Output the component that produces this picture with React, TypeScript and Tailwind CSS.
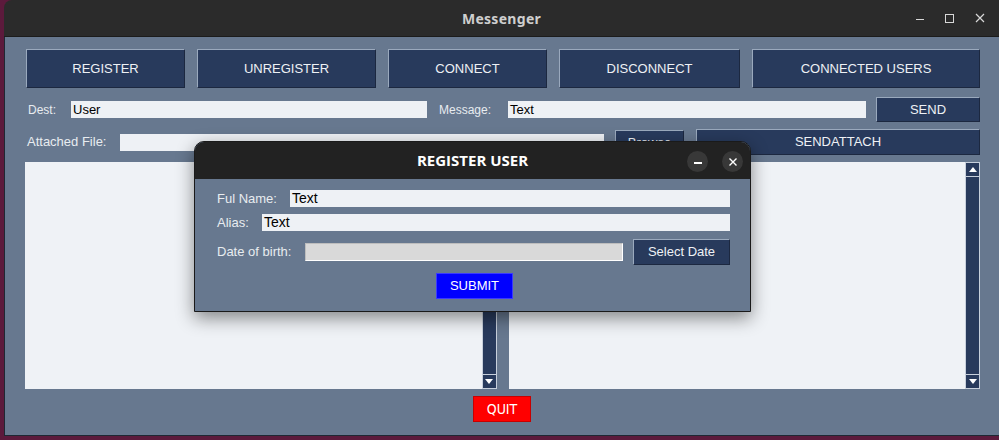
import React from "react";

const ui = { fontFamily: '"Liberation Sans", Arial, sans-serif' };

function Btn({ label, className = "" }: { label: string; className?: string }) {
  return (
    <div
      className={`flex items-center justify-center bg-[#283a5c] text-[13px] text-[#eef1f5] border border-t-[#9aa9bd] border-l-[#9aa9bd] border-b-[#1c2840] border-r-[#1c2840] ${className}`}
    >
      {label}
    </div>
  );
}

function Field({ value = "", className = "" }: { value?: string; className?: string }) {
  return (
    <div className={`h-[17px] bg-[#eef1f5] text-[13px] leading-[17px] text-black px-[2px] ${className}`}>
      {value}
    </div>
  );
}

function ScrollBar() {
  return (
    <div className="w-[15px] bg-[#283a5c] flex flex-col justify-between border border-[#c8d0dc]">
      <div className="h-[14px] border-b border-[#c8d0dc] flex items-center justify-center">
        <div className="w-0 h-0 border-l-[4px] border-r-[4px] border-b-[5px] border-l-transparent border-r-transparent border-b-white" />
      </div>
      <div className="h-[14px] border-t border-[#c8d0dc] flex items-center justify-center">
        <div className="w-0 h-0 border-l-[4px] border-r-[4px] border-t-[5px] border-l-transparent border-r-transparent border-t-white" />
      </div>
    </div>
  );
}

function RegisterDialog() {
  return (
    <div className="absolute left-[194px] top-[141px] w-[557px] h-[171px] rounded-t-[10px] border border-[#1a1a1a] bg-[#67788f] shadow-[0_6px_18px_rgba(0,0,0,0.45)] overflow-hidden">
      <div className="relative h-[37px] bg-[#222222] flex items-center justify-center">
        <span className="text-[15px] font-bold text-white" style={{ fontFamily: '"Open Sans", sans-serif' }}>
          REGISTER USER
        </span>
        <div className="absolute left-[492px] top-[9px] w-[21px] h-[21px] rounded-full bg-[#383838] flex items-center justify-center">
          <div className="w-[8px] h-[1.5px] bg-white mt-[3px]" />
        </div>
        <div className="absolute left-[527px] top-[9px] w-[21px] h-[21px] rounded-full bg-[#383838] flex items-center justify-center">
          <svg width="10" height="10" viewBox="0 0 10 10">
            <path d="M1.5 1.5 L8.5 8.5 M8.5 1.5 L1.5 8.5" stroke="white" strokeWidth="1.4" />
          </svg>
        </div>
      </div>
      <div className="flex flex-col pl-[22px] pr-[20px] pt-[11px] text-[13px] text-[#e8ecf0]">
        <div className="flex items-center h-[17px]">
          <span className="w-[73px]">Ful Name:</span>
          <Field value="Text" className="flex-1 text-[14px]" />
        </div>
        <div className="flex items-center h-[17px] mt-[7px]">
          <span className="w-[45px]">Alias:</span>
          <Field value="Text" className="flex-1 text-[14px]" />
        </div>
        <div className="flex items-center mt-[8px] h-[26px]">
          <span className="w-[88px]">Date of birth:</span>
          <div className="w-[318px] h-[18px] bg-[#d9d9d9] border border-t-[#bdbdbd] border-l-[#bdbdbd] border-b-white border-r-white" />
          <Btn label="Select Date" className="ml-[10px] w-[97px] h-[26px]" />
        </div>
        <div className="flex justify-center mt-[8px] pl-[2px]">
          <div className="w-[77px] h-[26px] bg-[#0000ff] flex items-center justify-center text-white border border-[#3a3aff]">
            SUBMIT
          </div>
        </div>
      </div>
    </div>
  );
}

export default function App() {
  return (
    <div className="relative w-[999px] h-[440px] bg-[#5c1a3c] pl-[4px] pb-[4px] overflow-hidden" style={ui}>
      <div className="h-full flex flex-col rounded-tl-[8px] overflow-hidden">
        <div className="relative h-[37px] bg-[#2b2b2b] flex items-center justify-center border-b border-[#1c1c1c]">
          <span className="text-[14px] font-bold text-[#cfcfcf] tracking-[0.3px]" style={{ fontFamily: '"Noto Sans", sans-serif' }}>
            Messenger
          </span>
          <div className="absolute right-[14px] top-0 h-full flex items-center gap-[21px]">
            <div className="w-[8px] h-[1px] bg-[#d8d8d8] mt-[3px]" />
            <div className="w-[9px] h-[9px] border border-[#d8d8d8]" />
            <svg width="10" height="10" viewBox="0 0 10 10">
              <path d="M1 1 L9 9 M9 1 L1 9" stroke="#d8d8d8" strokeWidth="1.2" />
            </svg>
          </div>
        </div>
        <div className="flex-1 bg-[#67788f] border-l border-b border-[#1f2733] pl-[21px] pr-[19px] pt-[12px] flex flex-col">
          <div className="flex gap-[12px] h-[39px]">
            <Btn label="REGISTER" className="w-[159px]" />
            <Btn label="UNREGISTER" className="w-[179px]" />
            <Btn label="CONNECT" className="w-[159px]" />
            <Btn label="DISCONNECT" className="w-[181px]" />
            <Btn label="CONNECTED USERS" className="w-[228px]" />
          </div>
          <div className="flex items-center h-[25px] mt-[9px] text-[12px] text-[#e8ecf0]">
            <span className="w-[45px] pl-[2px]">Dest:</span>
            <Field value="User" className="w-[356px] text-[12px]" />
            <span className="ml-[12px] w-[69px]">Message:</span>
            <Field value="Text" className="w-[358px] text-[12px]" />
            <Btn label="SEND" className="ml-[10px] w-[104px] h-[25px]" />
          </div>
          <div className="flex items-center h-[26px] mt-[7px] text-[13px] text-[#e8ecf0]">
            <span className="w-[94px] pl-[1px]">Attached File:</span>
            <Field className="w-[484px]" />
            <Btn label="Browse" className="ml-[11px] w-[69px] h-[26px] self-start mt-[1px]" />
            <Btn label="SENDATTACH" className="ml-[12px] w-[284px] h-[26px]" />
          </div>
          <div className="flex h-[227px] mt-[7px]">
            <div className="w-[457px] -ml-[1px] bg-[#eff2f6]" />
            <ScrollBar />
            <div className="w-[457px] ml-[12px] bg-[#eff2f6]" />
            <ScrollBar />
          </div>
          <div className="flex justify-center mt-[7px] pr-[2px]">
            <div
              className="w-[58px] h-[26px] bg-[#ff0000] text-white text-[14px] flex items-center justify-center border border-[#c80000]"
              style={{ fontFamily: '"DejaVu Sans Condensed", "Liberation Sans Narrow", sans-serif' }}
            >
              QUIT
            </div>
          </div>
        </div>
      </div>
      <RegisterDialog />
    </div>
  );
}
